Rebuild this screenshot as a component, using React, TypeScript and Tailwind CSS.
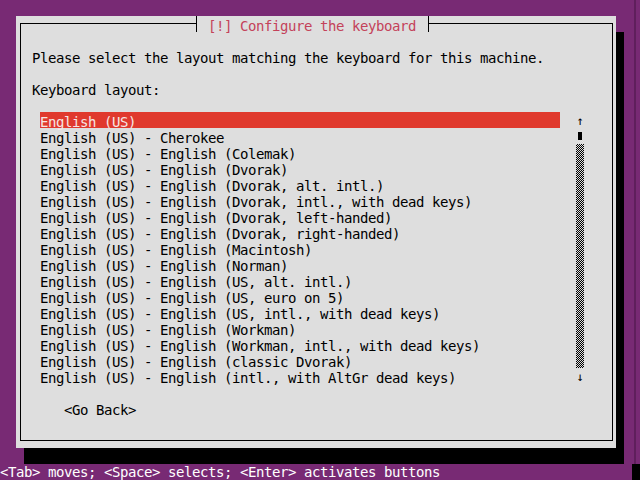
import React from "react";

const items = [
  "English (US)",
  "English (US) - Cherokee",
  "English (US) - English (Colemak)",
  "English (US) - English (Dvorak)",
  "English (US) - English (Dvorak, alt. intl.)",
  "English (US) - English (Dvorak, intl., with dead keys)",
  "English (US) - English (Dvorak, left-handed)",
  "English (US) - English (Dvorak, right-handed)",
  "English (US) - English (Macintosh)",
  "English (US) - English (Norman)",
  "English (US) - English (US, alt. intl.)",
  "English (US) - English (US, euro on 5)",
  "English (US) - English (US, intl., with dead keys)",
  "English (US) - English (Workman)",
  "English (US) - English (Workman, intl., with dead keys)",
  "English (US) - English (classic Dvorak)",
  "English (US) - English (intl., with AltGr dead keys)",
];

const mono = "font-['DejaVu_Sans_Mono',monospace] text-[14px] tracking-[-0.43px] leading-[20px] whitespace-pre";

function ScrollCell({ i }: { i: number }) {
  if (i === 0)
    return <div className="h-4 w-2 flex items-center justify-center text-[12px] leading-[16px] pt-[2px] text-black">↑</div>;
  if (i === 1)
    return (
      <div className="h-4 w-2 flex items-start justify-center pt-[4px]">
        <div className="w-[4px] h-[8px] bg-black" />
      </div>
    );
  if (i === items.length - 1)
    return <div className="h-4 w-2 flex items-center justify-center text-[12px] leading-[16px] pt-[2px] text-black">↓</div>;
  return (
    <div className="h-4 w-2 bg-[repeating-conic-gradient(#000000_0%_25%,#dedede_0%_50%)] bg-[length:2px_2px]" />
  );
}

export default function App() {
  return (
    <div className={`relative w-[640px] h-[480px] bg-[#782a74] overflow-hidden flex flex-col ${mono}`}>
      <div className="absolute right-[4px] top-0 h-[464px] w-[2px] bg-[#5f1f5c]" />
      <div className="h-4" />
      <div className="ml-4 relative w-[600px] h-[432px] bg-[#dedede] shadow-[8px_16px_0_0_#000] pt-[7px] pl-[4px] pr-[3px] pb-[7px]">
        <div className="h-full border border-black flex flex-col pl-[11px] text-black">
          <div className="h-[24px]" />
          <div className="h-4">Please select the layout matching the keyboard for this machine.</div>
          <div className="h-4" />
          <div className="h-4">Keyboard layout:</div>
          <div className="h-4" />
          <div className="flex ml-2">
            <div className="w-[520px] flex flex-col">
              {items.map((t, i) => (
                <div
                  key={i}
                  className={i === 0 ? "h-4 bg-[#e0392d] text-[#f6e6e4]" : "h-4"}
                >
                  {t}
                </div>
              ))}
            </div>
            <div className="ml-4 flex flex-col">
              {items.map((_, i) => (
                <ScrollCell key={i} i={i} />
              ))}
            </div>
          </div>
          <div className="h-4" />
          <div className="h-4 pl-8">&lt;Go Back&gt;</div>
        </div>
        <div className="absolute left-[180px] top-0 h-4 flex bg-[#dedede]">
          <div className="w-px h-4 bg-black" />
          <div className="ml-[11px] w-[208px] h-4 text-[#c4425a]">[!] Configure the keyboard</div>
          <div className="ml-[12px] w-px h-4 bg-black" />
        </div>
      </div>
      <div className="h-4" />
      <div className="flex h-4">
        <div className="w-[632px] h-4 leading-[17px] text-white">&lt;Tab&gt; moves; &lt;Space&gt; selects; &lt;Enter&gt; activates buttons</div>
        <div className="w-2 h-4 bg-black" />
      </div>
    </div>
  );
}
